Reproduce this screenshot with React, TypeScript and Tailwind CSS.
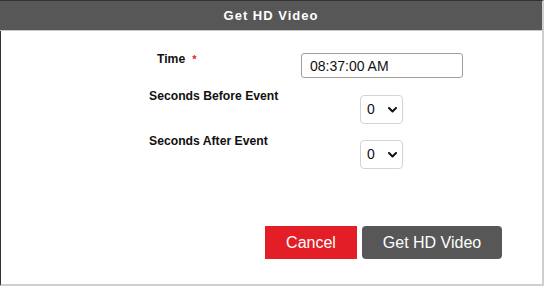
import React from "react";

function Chevron() {
  return (
    <svg width="9" height="6" viewBox="0 0 9 6" className="pointer-events-none absolute right-[6px] top-[12px]">
      <path d="M1 1 L4.5 4.5 L8 1" fill="none" stroke="#111" strokeWidth="2" strokeLinecap="round" strokeLinejoin="round" />
    </svg>
  );
}

function Select() {
  return (
    <div className="relative h-[29px] w-[43px]">
      <select className="h-full w-full appearance-none rounded-[4px] border border-[#d4d4d4] bg-white pl-[6px] text-[14px] text-[#111] outline-none" defaultValue="0">
        <option value="0">0</option>
      </select>
      <Chevron />
    </div>
  );
}

export default function App() {
  return (
    <div
      className="flex h-[286px] w-[544px] flex-col border-t border-l border-t-[#333] border-l-[#333] border-r-2 border-b-2 border-r-[#cfcfcf] border-b-[#cfcfcf] bg-white"
      style={{ fontFamily: '"Liberation Sans", Arial, sans-serif' }}
    >
      <div className="flex h-[30px] items-center justify-center border-b border-b-[#c8c8c8] bg-[#575757] -ml-px">
        <span className="text-[13px] font-bold tracking-[1px] text-white">Get HD Video</span>
      </div>
      <div className="flex flex-1 flex-col pl-[148px] pt-[21px]">
        <div className="flex">
          <div className="w-[152px] pl-2 text-[12.2px] font-bold leading-[14px] text-[#111]">
            Time<span className="ml-[7px] text-[11px] text-[#e31e26]">*</span>
          </div>
          <input
            className="mt-px h-[25px] w-[162px] rounded-[3px] border border-[#a0a0a0] px-2 text-[14px] text-[#111] outline-none"
            defaultValue="08:37:00 AM"
            readOnly
          />
        </div>
        <div className="mt-[11px] flex">
          <div className="w-[152px] text-[12.2px] font-bold leading-[14px] text-[#111]">Seconds Before Event</div>
          <div className="mt-[6px] flex w-[162px] pl-[59px]">
            <Select />
          </div>
        </div>
        <div className="mt-[10px] flex">
          <div className="w-[152px] text-[12.2px] font-bold leading-[14px] text-[#111]">Seconds After Event</div>
          <div className="mt-[6px] flex w-[162px] pl-[59px]">
            <Select />
          </div>
        </div>
        <div className="mt-[57px] flex justify-end gap-[5px] pr-[40px]">
          <button className="h-[33px] w-[92px] bg-[#e41e26] text-[16px] text-white">Cancel</button>
          <button className="h-[33px] w-[140px] rounded-[4px] bg-[#575757] text-[16px] text-white">Get HD Video</button>
        </div>
      </div>
    </div>
  );
}
